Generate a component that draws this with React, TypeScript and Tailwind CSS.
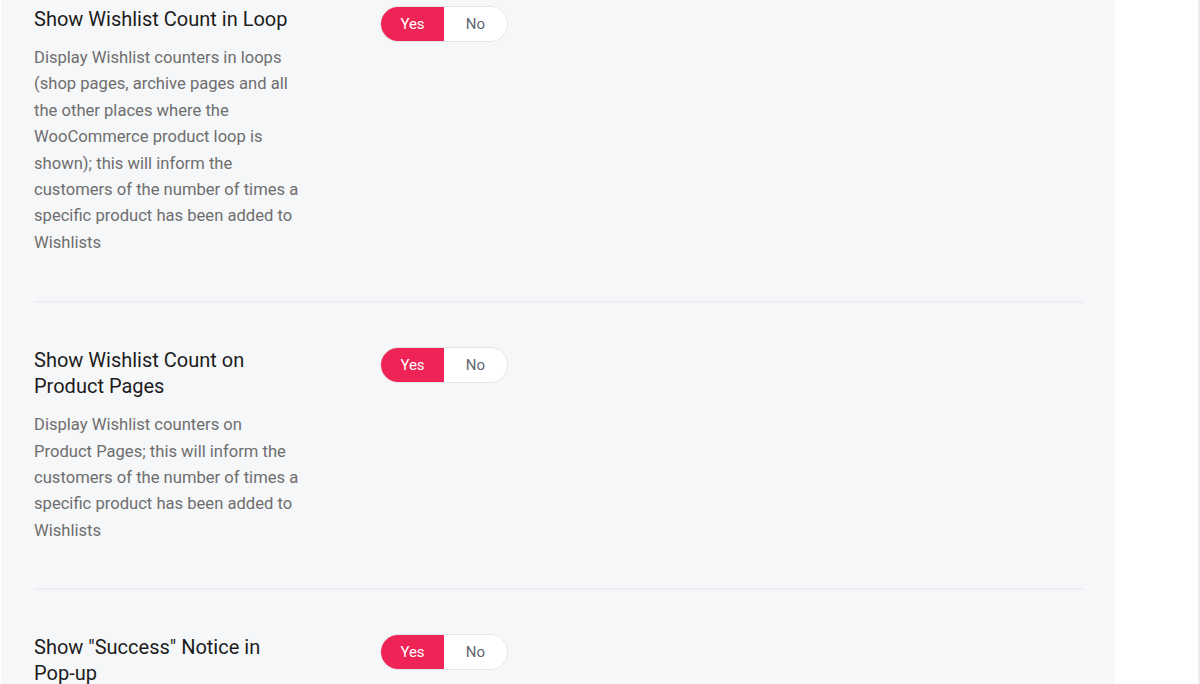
import React, { useState } from "react";

type Setting = {
  id: string;
  title: string;
  description?: string;
  value: boolean;
};

const SETTINGS: Setting[] = [
  {
    id: "loop",
    title: "Show Wishlist Count in Loop",
    description:
      "Display Wishlist counters in loops (shop pages, archive pages and all the other places where the WooCommerce product loop is shown); this will inform the customers of the number of times a specific product has been added to Wishlists",
    value: true,
  },
  {
    id: "product",
    title: "Show Wishlist Count on Product Pages",
    description:
      "Display Wishlist counters on Product Pages; this will inform the customers of the number of times a specific product has been added to Wishlists",
    value: true,
  },
  {
    id: "notice",
    title: 'Show "Success" Notice in Pop-up',
    description:
      "Display a notice inside the pop-up when a product has been successfully added to the Wishlist",
    value: true,
  },
];

function YesNo({ value, onChange }: { value: boolean; onChange: (v: boolean) => void }) {
  return (
    <div className="flex h-[36px] w-[128px] overflow-hidden rounded-full border border-[#e3e5e8] bg-white">
      <button
        onClick={() => onChange(true)}
        className={
          value
            ? "flex-1 bg-[#ef2456] text-[15px] text-white"
            : "flex-1 bg-white text-[15px] text-[#5f6670]"
        }
      >
        Yes
      </button>
      <button
        onClick={() => onChange(false)}
        className={
          !value
            ? "flex-1 bg-[#ef2456] text-[15px] text-white"
            : "flex-1 bg-white text-[15px] text-[#5f6670]"
        }
      >
        No
      </button>
    </div>
  );
}

export default function App() {
  const [values, setValues] = useState<Record<string, boolean>>(
    Object.fromEntries(SETTINGS.map((s) => [s.id, s.value]))
  );

  return (
    <div className="flex h-[684px] overflow-hidden bg-white font-['Roboto',sans-serif]">
      <div className="w-px shrink-0 bg-white" />
      <div className="w-[1114px] shrink-0 bg-[#f6f7f9] pl-[33px] pr-[32px] pt-[6px]">
        {SETTINGS.map((s, i) => (
          <div
            key={s.id}
            className={
              i === 0
                ? "grid grid-cols-[346px_1fr] border-b-2 border-[#eceef1] pb-[45px]"
                : "grid grid-cols-[346px_1fr] border-b-2 border-[#eceef1] pt-[44px] pb-[44px]"
            }
          >
            <div className="max-w-[270px]">
              <h3 className="text-[20px] leading-[26px] text-[#1c1c1c]">{s.title}</h3>
              <p className="mt-[13px] text-[16.6px] leading-[26.4px] text-[#6e6e6e]">{s.description}</p>
            </div>
            <div>
              <YesNo value={values[s.id]} onChange={(v) => setValues({ ...values, [s.id]: v })} />
            </div>
          </div>
        ))}
      </div>
      <div className="flex-1 bg-white" />
      <div className="w-[2px] shrink-0 bg-[#ececec]" />
    </div>
  );
}
